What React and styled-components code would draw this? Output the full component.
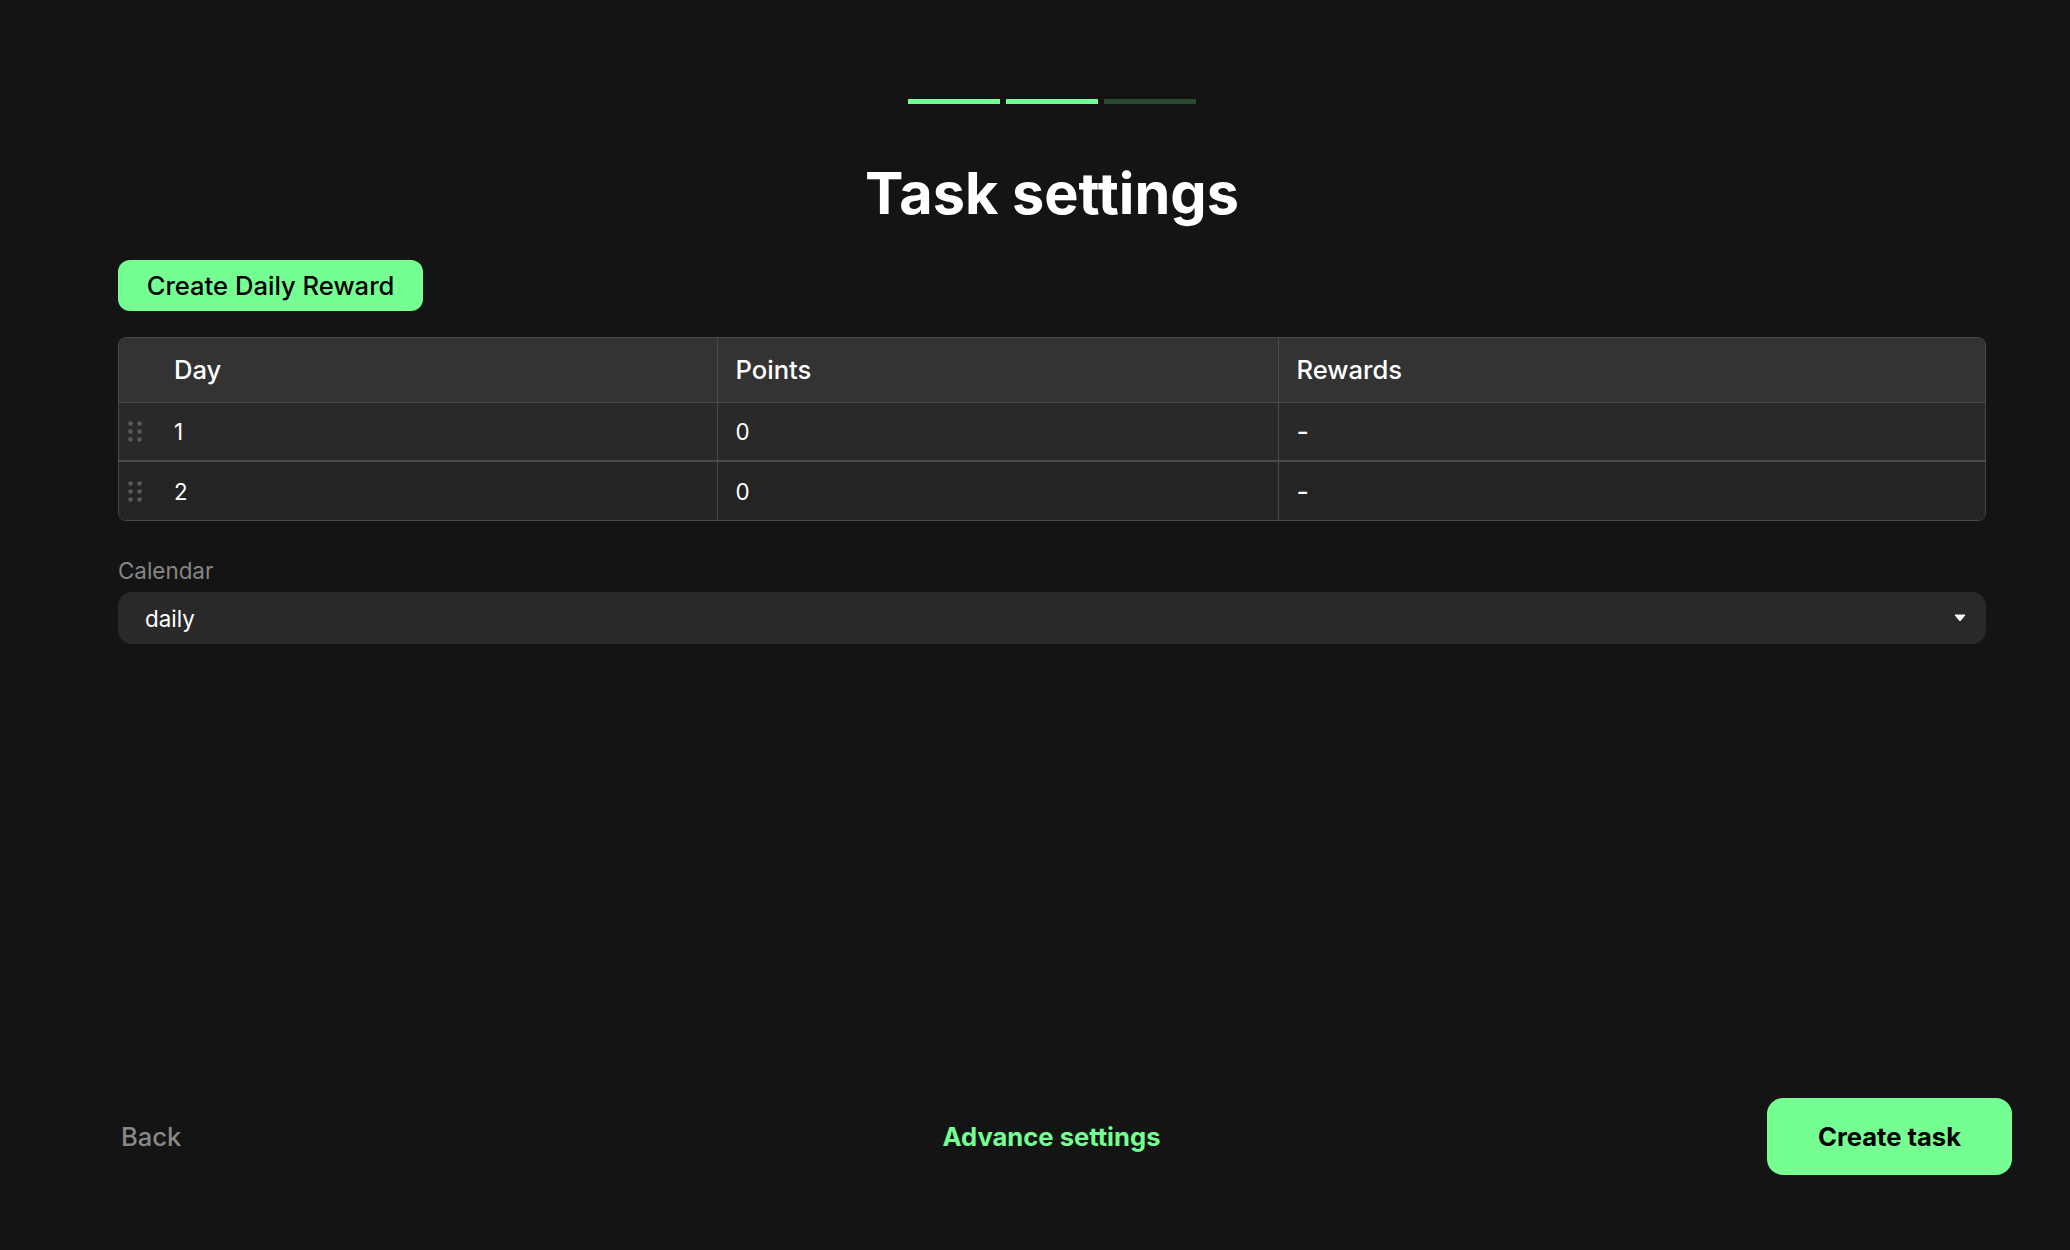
import React from 'react';
import styled, { createGlobalStyle } from 'styled-components';

const GREEN = '#75FF92';
const LINE = '#4a4a4a';

const rows = [
  { day: 1, points: 0, rewards: '-' },
  { day: 2, points: 0, rewards: '-' },
];

export default function App() {
  return (
    <Page>
      <GlobalStyle />
      <Content>
        <Steps>
          <Step $active />
          <Step $active />
          <Step />
        </Steps>
        <Title>Task settings</Title>
        <AddButton type="button">Create Daily Reward</AddButton>
        <TableWrap>
          <Table>
            <colgroup>
              <col style={{ width: 55 }} />
              <col style={{ width: 543 }} />
              <col style={{ width: 561 }} />
              <col />
            </colgroup>
            <thead>
              <tr>
                <HeadCell $plain />
                <HeadCell $plain $tight>Day</HeadCell>
                <HeadCell>Points</HeadCell>
                <HeadCell>Rewards</HeadCell>
              </tr>
            </thead>
            <tbody>
              {rows.map((row, index) => (
                <Row key={row.day} $even={index % 2 === 1}>
                  <HandleCell><DragHandle /></HandleCell>
                  <BodyCell $plain $tight>{row.day}</BodyCell>
                  <BodyCell>{row.points}</BodyCell>
                  <BodyCell><Dash>{row.rewards}</Dash></BodyCell>
                </Row>
              ))}
            </tbody>
          </Table>
        </TableWrap>
        <Field>
          <FieldLabel>Calendar</FieldLabel>
          <SelectBox>
            <span>daily</span>
            <Caret viewBox="0 0 12 8">
              <path d="M1 1h10L6 7z" fill="#fff" stroke="#fff" strokeLinejoin="round" />
            </Caret>
          </SelectBox>
        </Field>
      </Content>
      <Footer>
        <BackButton type="button">Back</BackButton>
        <AdvanceLink type="button">Advance settings</AdvanceLink>
        <SubmitButton type="button">Create task</SubmitButton>
      </Footer>
    </Page>
  );
}

function DragHandle() {
  return (
    <Dots viewBox="0 0 14 21">
      {[2.5, 10.5, 18.5].map((y) => (
        <g key={y}>
          <circle cx="2.5" cy={y} r="2.3" />
          <circle cx="11.5" cy={y} r="2.3" />
        </g>
      ))}
    </Dots>
  );
}

const GlobalStyle = createGlobalStyle`
  html, body {
    margin: 0;
    padding: 0;
    background: #141414;
  }
  * {
    box-sizing: border-box;
  }
`;

const Page = styled.div`
  width: 2070px;
  height: 1250px;
  display: flex;
  flex-direction: column;
  justify-content: space-between;
  background: #141414;
  color: #fff;
  font-family: Inter, "Liberation Sans", sans-serif;
`;

const Content = styled.div`
  padding: 99px 84px 0 118px;
  display: flex;
  flex-direction: column;
`;

const Steps = styled.div`
  display: flex;
  justify-content: center;
  gap: 6px;
`;

const Step = styled.div`
  width: 92px;
  height: 5px;
  background: ${(p) => (p.$active ? GREEN : '#2a4a30')};
`;

const Title = styled.h1`
  margin: 48px 0 0;
  font-size: 57.6px;
  line-height: 82px;
  font-weight: 700;
  text-align: center;
`;

const AddButton = styled.button`
  align-self: flex-start;
  margin-top: 26px;
  width: 305px;
  height: 51px;
  border: 0;
  border-radius: 12px;
  background: ${GREEN};
  color: #000;
  font-family: inherit;
  font-size: 25.6px;
  font-weight: 500;
`;

const TableWrap = styled.div`
  margin-top: 26px;
  border: 1.5px solid ${LINE};
  border-radius: 8px;
  overflow: hidden;
`;

const Table = styled.table`
  width: 100%;
  table-layout: fixed;
  border-collapse: collapse;
`;

const HeadCell = styled.th`
  height: 64px;
  padding: 0 ${(p) => (p.$tight ? '0' : '18px')};
  background: #333333;
  border-bottom: 1.5px solid ${LINE};
  border-left: ${(p) => (p.$plain ? '0' : `1.5px solid ${LINE}`)};
  color: #fff;
  font-size: 25.6px;
  font-weight: 450;
  text-align: left;
`;

const Row = styled.tr`
  background: ${(p) => (p.$even ? '#242424' : '#292929')};
  border-bottom: ${(p) => (p.$even ? '0' : `2.5px solid ${LINE}`)};
`;

const BodyCell = styled.td`
  height: 59px;
  padding: 0 ${(p) => (p.$tight ? '0' : '18px')};
  border-left: ${(p) => (p.$plain ? '0' : `1.5px solid ${LINE}`)};
  color: #fff;
  font-size: 22.4px;
`;

const Dash = styled.span`
  font-size: 27px;
  vertical-align: -2px;
`;

const HandleCell = styled.td`
  padding: 0 0 0 9px;
`;

const Dots = styled.svg`
  display: block;
  width: 14px;
  height: 21px;
  fill: #595959;
`;

const Field = styled.div`
  margin-top: 35px;
  display: flex;
  flex-direction: column;
  gap: 6px;
`;

const FieldLabel = styled.label`
  color: #858585;
  font-size: 22.4px;
  line-height: 30px;
`;

const SelectBox = styled.div`
  height: 52px;
  padding: 0 20px 0 27px;
  display: flex;
  align-items: center;
  justify-content: space-between;
  border-radius: 14px;
  background: #292929;
  color: #fff;
  font-size: 22.4px;
`;

const Caret = styled.svg`
  width: 12px;
  height: 8px;
`;

const Footer = styled.div`
  padding: 0 58px 75px 91px;
  display: grid;
  grid-template-columns: 1fr auto 1fr;
  align-items: center;
`;

const TextButton = styled.button`
  border: 0;
  background: none;
  font-family: inherit;
  font-size: 25.6px;
`;

const BackButton = styled(TextButton)`
  justify-self: start;
  padding: 0 30px;
  color: #888888;
  font-weight: 450;
`;

const AdvanceLink = styled(TextButton)`
  padding: 0;
  color: ${GREEN};
  font-weight: 700;
`;

const SubmitButton = styled.button`
  justify-self: end;
  width: 245px;
  height: 77px;
  border: 0;
  border-radius: 16px;
  background: ${GREEN};
  color: #000;
  font-family: inherit;
  font-size: 25.6px;
  font-weight: 700;
`;
